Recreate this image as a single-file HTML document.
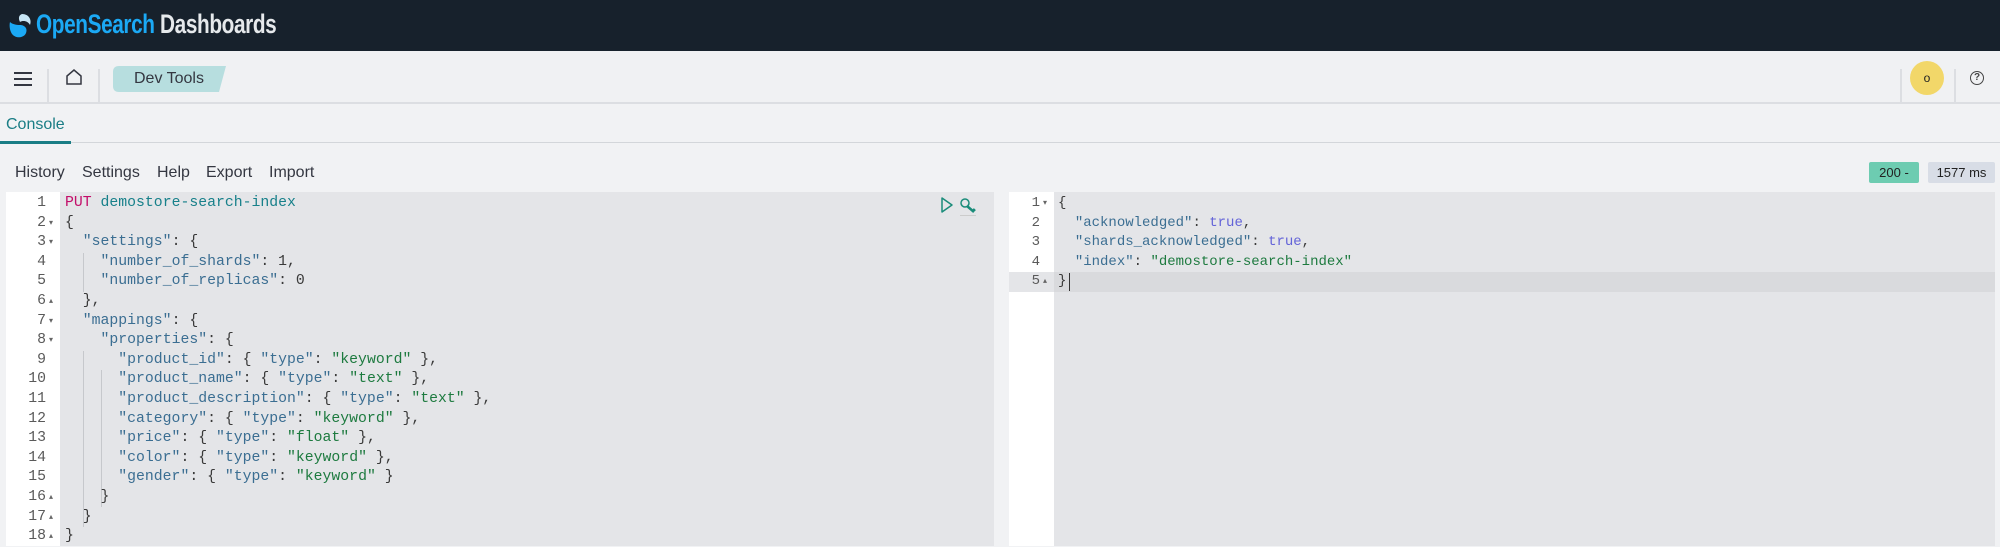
<!DOCTYPE html>
<html><head><meta charset="utf-8"><style>
*{margin:0;padding:0;box-sizing:border-box}
body{width:2000px;height:546px;overflow:hidden;background:#f1f2f4;font-family:"Liberation Sans",sans-serif;position:relative}
.abs{position:absolute}
.hdr{left:0;top:0;width:2000px;height:51px;background:#17212c}
.bar{left:0;top:51px;width:2000px;height:53px;background:#f0f1f3;border-bottom:2px solid #dcdee2}
.sep{width:2px;background:#dcdee2}
.code{font-family:"Liberation Mono",monospace;line-height:19.6px;white-space:pre}
.k{color:#3b6e92}.v{color:#1d7a3f}.p{color:#3a3a3a}.m{color:#c30e6a}.u{color:#17808a}.t{color:#6363d8}
.ln{font-family:"Liberation Mono",monospace;line-height:19.6px;color:#5a5a5a;text-align:right}
.f{font-size:8px;color:#666}
.guide{width:1px;background:#c6c8cc}
</style></head><body>
<div class="abs hdr"></div>
<svg class="abs" style="left:8px;top:12px" width="26" height="28" viewBox="0 0 26 28">
<path d="M14 2 C21 2 24 8 22 13 C20 9 15 8 12 10 C10 6 11 3 14 2Z" fill="#c7e5f5"/>
<path d="M2 10 C4 12 8 13 12 13 C16 13 20 16 18 21 C16 26 8 27 4 22 C2 19 1 14 2 10Z" fill="#1ba9f5"/>
</svg>
<div class="abs" style="left:36px;top:9px;font-size:27px;font-weight:bold;transform:scaleX(0.77);transform-origin:left;letter-spacing:-0.5px;white-space:nowrap"><span style="color:#1ba9f5">OpenSearch</span> <span style="color:#e6e9ec">Dashboards</span></div>
<div class="abs bar"></div>
<div class="abs" style="left:14px;top:72px;width:18px;height:2px;background:#343741;box-shadow:0 6px 0 #343741,0 12px 0 #343741"></div>
<div class="abs sep" style="left:47px;top:69px;height:35px"></div>
<svg class="abs" style="left:65px;top:68px" width="18" height="18" viewBox="0 0 18 18"><path d="M2 16 V8 L9 2 L16 8 V16 Z" fill="none" stroke="#343741" stroke-width="1.5"/></svg>
<div class="abs sep" style="left:98px;top:69px;height:35px"></div>
<svg class="abs" style="left:113px;top:66px" width="113" height="26"><path d="M6 0 H113 L106 26 H6 Q0 26 0 20 V6 Q0 0 6 0Z" fill="#b7dedf"/></svg>
<div class="abs" style="left:134px;top:70px;font-size:16px;color:#343741">Dev Tools</div>
<div class="abs sep" style="left:1900px;top:69px;height:35px"></div>
<div class="abs" style="left:1910px;top:61px;width:34px;height:34px;border-radius:50%;background:#f2d769;text-align:center;line-height:34px;font-size:12px;color:#222">o</div>
<div class="abs sep" style="left:1954px;top:69px;height:35px"></div>
<div class="abs" style="left:1970px;top:71px;width:14px;height:14px;border:1.5px solid #444;border-radius:50%;font-size:10px;line-height:11px;text-align:center;color:#444;font-weight:bold">?</div>
<div class="abs" style="left:0;top:142px;width:2000px;height:1px;background:#d3d6da"></div>
<div class="abs" style="left:6px;top:116px;font-size:16px;color:#1a7d85">Console</div>
<div class="abs" style="left:0;top:141px;width:71px;height:3px;background:#1a7d85"></div>
<div class="abs" style="left:15px;top:164px;font-size:16px;color:#343741">History</div>
<div class="abs" style="left:82px;top:164px;font-size:16px;color:#343741">Settings</div>
<div class="abs" style="left:157px;top:164px;font-size:16px;color:#343741">Help</div>
<div class="abs" style="left:206px;top:164px;font-size:16px;color:#343741">Export</div>
<div class="abs" style="left:269px;top:164px;font-size:16px;color:#343741">Import</div>
<div class="abs" style="left:1869px;top:162px;width:50px;height:21px;background:#6dccb1;border-radius:2px;font-size:13px;line-height:21px;text-align:center;color:#222">200 -</div>
<div class="abs" style="left:1928px;top:162px;width:67px;height:21px;background:#d8dde6;border-radius:2px;font-size:13px;line-height:21px;text-align:center;color:#222">1577 ms</div>
<!-- left editor -->
<div class="abs" style="left:6px;top:192px;width:988px;height:354px;background:#e4e5e8"></div>
<div class="abs" style="left:6px;top:192px;width:54px;height:354px;background:#fff"></div>
<div class="abs ln" style="left:6px;top:194px;width:40px;font-size:14.8px">1<br>2<br>3<br>4<br>5<br>6<br>7<br>8<br>9<br>10<br>11<br>12<br>13<br>14<br>15<br>16<br>17<br>18</div>
<div class="abs ln f" style="left:49px;top:194px;text-align:left;font-size:8px"><br>▾<br>▾<br><br><br>▴<br>▾<br>▾<br><br><br><br><br><br><br><br>▴<br>▴<br>▴</div>
<div class="abs guide" style="left:83px;top:253px;height:39px"></div>
<div class="abs guide" style="left:83px;top:351px;height:176px"></div>
<div class="abs guide" style="left:101px;top:370px;height:137px"></div>
<div class="abs code" style="left:65px;top:194px;font-size:14.8px"><span class="m">PUT</span> <span class="u">demostore-search-index</span>
<span class="p">{</span>
  <span class="k">"settings"</span><span class="p">: {</span>
    <span class="k">"number_of_shards"</span><span class="p">: 1,</span>
    <span class="k">"number_of_replicas"</span><span class="p">: 0</span>
  <span class="p">},</span>
  <span class="k">"mappings"</span><span class="p">: {</span>
    <span class="k">"properties"</span><span class="p">: {</span>
      <span class="k">"product_id"</span><span class="p">: { </span><span class="k">"type"</span><span class="p">: </span><span class="v">"keyword"</span><span class="p"> },</span>
      <span class="k">"product_name"</span><span class="p">: { </span><span class="k">"type"</span><span class="p">: </span><span class="v">"text"</span><span class="p"> },</span>
      <span class="k">"product_description"</span><span class="p">: { </span><span class="k">"type"</span><span class="p">: </span><span class="v">"text"</span><span class="p"> },</span>
      <span class="k">"category"</span><span class="p">: { </span><span class="k">"type"</span><span class="p">: </span><span class="v">"keyword"</span><span class="p"> },</span>
      <span class="k">"price"</span><span class="p">: { </span><span class="k">"type"</span><span class="p">: </span><span class="v">"float"</span><span class="p"> },</span>
      <span class="k">"color"</span><span class="p">: { </span><span class="k">"type"</span><span class="p">: </span><span class="v">"keyword"</span><span class="p"> },</span>
      <span class="k">"gender"</span><span class="p">: { </span><span class="k">"type"</span><span class="p">: </span><span class="v">"keyword"</span><span class="p"> }</span>
    <span class="p">}</span>
  <span class="p">}</span>
<span class="p">}</span></div>
<svg class="abs" style="left:940px;top:197px" width="40" height="20" viewBox="0 0 40 20"><path d="M2 1 L12 8 L2 15 Z" fill="none" stroke="#1a8c7a" stroke-width="1.5" stroke-linejoin="round"/><circle cx="25" cy="6" r="4" fill="none" stroke="#1a8c7a" stroke-width="1.5"/><path d="M27 9 L34 15 M33 12 L35 14" stroke="#1a8c7a" stroke-width="2.5" fill="none"/><rect x="20" y="18" width="16" height="1" fill="#ccc"/></svg>
<!-- right editor -->
<div class="abs" style="left:1009px;top:192px;width:986px;height:354px;background:#e4e5e8"></div>
<div class="abs" style="left:1009px;top:192px;width:45px;height:354px;background:#fff"></div>
<div class="abs" style="left:1009px;top:272px;width:986px;height:19.6px;background:#d9dadd"></div>
<div class="abs" style="left:1009px;top:272px;width:45px;height:19.6px;background:#e4e5e8"></div>
<div class="abs ln" style="left:1009px;top:194px;width:31px;font-size:14px">1<br>2<br>3<br>4<br>5</div>
<div class="abs ln f" style="left:1043px;top:194px;text-align:left">▾<br><br><br><br>▴</div>
<div class="abs code" style="left:1058px;top:194px;font-size:14px"><span class="p">{</span>
  <span class="k">"acknowledged"</span><span class="p">: </span><span class="t">true</span><span class="p">,</span>
  <span class="k">"shards_acknowledged"</span><span class="p">: </span><span class="t">true</span><span class="p">,</span>
  <span class="k">"index"</span><span class="p">: </span><span class="v">"demostore-search-index"</span>
<span class="p">}</span></div>
<div class="abs" style="left:1069px;top:273px;width:1px;height:18px;background:#333"></div>
</body></html>
